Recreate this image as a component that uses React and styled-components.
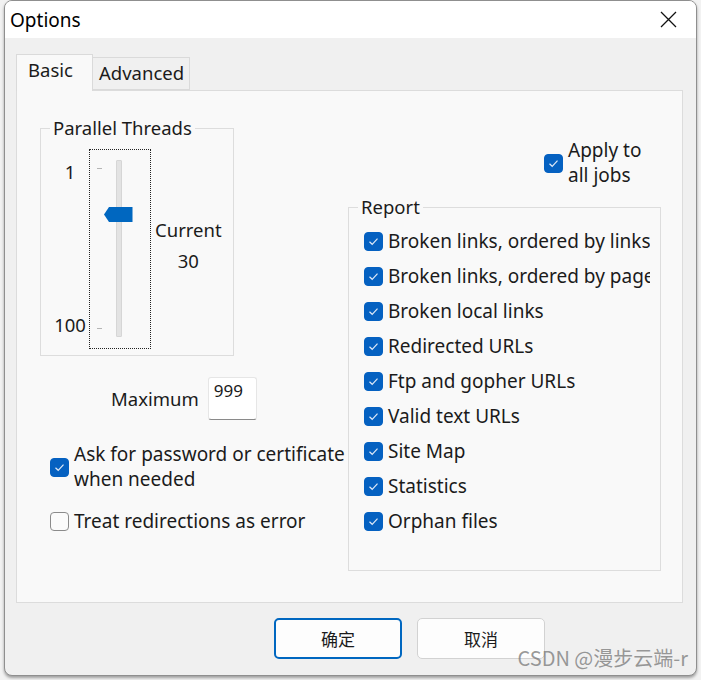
import styled, { createGlobalStyle } from "styled-components";

const Global = createGlobalStyle`
  html, body { margin: 0; padding: 0; }
  body {
    background: #f3f3f3;
    font-family: "Noto Sans", "Noto Sans CJK SC", sans-serif;
    color: #1b1b1b;
  }
  * { box-sizing: border-box; }
`;

const Screen = styled.div`
  position: relative;
  width: 701px;
  height: 680px;
  padding: 0 4px 4px 4px;
  background: #f2f2f2;
  overflow: hidden;
`;

const Window = styled.div`
  width: 693px;
  height: 676px;
  display: flex;
  flex-direction: column;
  background: #f0f0f0;
  border: 1px solid #8f8f8f;
  border-radius: 8px;
  overflow: hidden;
  box-shadow: 0 2px 3px rgba(0, 0, 0, 0.35);
`;

const TitleBar = styled.div`
  height: 37px;
  flex: none;
  display: flex;
  align-items: center;
  justify-content: space-between;
  padding: 0 19px 0 5px;
  background: #ffffff;
  font-size: 19px;
  color: #000;
`;

const Body = styled.div`
  flex: 1;
  display: flex;
  flex-direction: column;
  padding: 16px 13px 0 11px;
`;

const TabRow = styled.div`
  display: flex;
  align-items: flex-end;
  height: 36px;
  position: relative;
  z-index: 1;
`;

const Tab = styled.div`
  height: ${(p) => (p.$active ? "37px" : "33px")};
  width: ${(p) => p.$w}px;
  display: flex;
  align-items: center;
  padding-left: ${(p) => (p.$active ? "11px" : "6px")};
  margin-bottom: ${(p) => (p.$active ? "-1px" : "0")};
  background: ${(p) => (p.$active ? "#f9f9f9" : "#f0f0f0")};
  border: 1px solid #dadada;
  border-bottom: ${(p) => (p.$active ? "none" : "1px solid #dadada")};
  border-left: ${(p) => (p.$active ? "1px solid #dadada" : "none")};
  font-size: 18.5px;
  line-height: 1;
  padding-bottom: ${(p) => (p.$active ? "5px" : "0")};
`;

const Panel = styled.div`
  height: 513px;
  display: flex;
  background: #f9f9f9;
  border: 1px solid #dcdcdc;
  padding: 26px 21px 0 23px;
`;

const LeftCol = styled.div`
  width: 308px;
  flex: none;
  display: flex;
  flex-direction: column;
`;

const RightCol = styled.div`
  width: 313px;
  flex: none;
  display: flex;
  flex-direction: column;
`;

const Group = styled.fieldset`
  margin: 0;
  padding: 0;
  width: ${(p) => p.$w}px;
  height: ${(p) => p.$h}px;
  border: 1px solid #dddddd;
  min-inline-size: 0;
`;

const Legend = styled.legend`
  margin-left: 9px;
  padding: 0 3px;
  font-size: 18.5px;
  line-height: 22px;
`;

const SliderArea = styled.div`
  display: flex;
  padding: 10px 0 0 10px;
`;

const ScaleLabels = styled.div`
  width: 38px;
  height: 200px;
  display: flex;
  flex-direction: column;
  align-items: center;
  justify-content: space-between;
  padding: 12px 0 13px 0;
  font-size: 18.5px;
  line-height: 22px;
`;

const FocusBox = styled.div`
  width: 62px;
  height: 200px;
  border: 1px dotted #222;
  display: flex;
  padding: 10px 0 11px 7px;
`;

const Ticks = styled.div`
  width: 6px;
  display: flex;
  flex-direction: column;
  justify-content: space-between;
  padding: 8px 0;
`;

const Tick = styled.span`
  display: block;
  width: 5px;
  height: 1px;
  background: #b5b5b5;
`;

const Track = styled.div`
  position: relative;
  width: 6px;
  margin-left: 13px;
  background: #e3e3e3;
  border: 1px solid #d6d6d6;
  border-radius: 1px;
`;

const Thumb = styled.svg`
  position: absolute;
  left: -13px;
  top: 46px;
`;

const CurrentCol = styled.div`
  display: flex;
  flex-direction: column;
  align-items: center;
  padding: 70px 0 0 4px;
  font-size: 18.5px;
  line-height: 22px;
  gap: 9px;
`;

const MaxRow = styled.div`
  display: flex;
  align-items: center;
  gap: 9px;
  margin: 21px 0 0 71px;
  font-size: 18.5px;
`;

const NumBox = styled.div`
  width: 49px;
  height: 43px;
  background: #fff;
  border: 1px solid #e6e6e6;
  border-bottom: 1px solid #8a8a8a;
  border-radius: 3px;
  padding: 2px 0 0 5px;
  font-size: 17px;
  line-height: 22px;
`;

const CheckRow = styled.label`
  display: flex;
  align-items: center;
  gap: 5px;
  margin: ${(p) => p.$m || "0"};
  font-size: 19px;
  line-height: 25px;
  white-space: nowrap;
  overflow: hidden;
`;

const Box = styled.span`
  flex: none;
  width: 19px;
  height: 19px;
  border-radius: 4px;
  display: flex;
  align-items: center;
  justify-content: center;
  background: ${(p) => (p.$on ? "#0561c1" : "#fbfbfb")};
  border: 1px solid ${(p) => (p.$on ? "#0561c1" : "#8b8b8b")};
`;

const ReportList = styled.div`
  display: flex;
  flex-direction: column;
  gap: 10px;
  padding: 11px 10px 0 15px;
`;

const Footer = styled.div`
  display: flex;
  gap: 15px;
  padding: 15px 0 0 258px;
`;

const Button = styled.button`
  width: 128px;
  height: 41px;
  background: #fdfdfd;
  border: ${(p) => (p.$primary ? "2px solid #0067c0" : "1px solid #d2d2d2")};
  border-radius: 5px;
  font-family: "Noto Sans CJK SC", sans-serif;
  font-size: 17px;
  color: #1b1b1b;
`;

const Watermark = styled.div`
  position: absolute;
  right: 13px;
  bottom: 8px;
  font-family: "Noto Sans CJK SC", sans-serif;
  font-size: 20px;
  color: rgba(120, 120, 120, 0.75);
`;

function Check({ on }) {
  return (
    <Box $on={on}>
      {on && (
        <svg width="11" height="9" viewBox="0 0 11 9">
          <path d="M1.5 4.8 L4.2 7.3 L9.5 1.6" fill="none" stroke="#dfe9f7" strokeWidth="1.2" />
        </svg>
      )}
    </Box>
  );
}

const reports = [
  "Broken links, ordered by links",
  "Broken links, ordered by page",
  "Broken local links",
  "Redirected URLs",
  "Ftp and gopher URLs",
  "Valid text URLs",
  "Site Map",
  "Statistics",
  "Orphan files",
];

export default function App() {
  return (
    <Screen>
      <Global />
      <Window>
        <TitleBar>
          <span>Options</span>
          <svg width="17" height="17" viewBox="0 0 17 17">
            <path d="M1 1 L16 16 M16 1 L1 16" stroke="#111" strokeWidth="1.3" />
          </svg>
        </TitleBar>
        <Body>
          <TabRow>
            <Tab $active $w={77}>Basic</Tab>
            <Tab $w={97}>Advanced</Tab>
          </TabRow>
          <Panel>
            <LeftCol>
              <Group $w={194} $h={239}>
                <Legend>Parallel Threads</Legend>
                <SliderArea>
                  <ScaleLabels>
                    <span>1</span>
                    <span>100</span>
                  </ScaleLabels>
                  <FocusBox>
                    <Ticks>
                      <Tick />
                      <Tick />
                    </Ticks>
                    <Track>
                      <Thumb width="29" height="15" viewBox="0 0 29 15">
                        <path d="M0 7.5 L5 0 H28.5 V15 H5 Z" fill="#0067c0" />
                      </Thumb>
                    </Track>
                  </FocusBox>
                  <CurrentCol>
                    <span>Current</span>
                    <span>30</span>
                  </CurrentCol>
                </SliderArea>
              </Group>
              <MaxRow>
                <span>Maximum</span>
                <NumBox>999</NumBox>
              </MaxRow>
              <CheckRow $m="22px 0 0 10px">
                <Check on />
                <span>
                  Ask for password or certificate
                  <br />
                  when needed
                </span>
              </CheckRow>
              <CheckRow $m="17px 0 0 10px">
                <Check />
                <span>Treat redirections as error</span>
              </CheckRow>
            </LeftCol>
            <RightCol>
              <CheckRow $m="21px 0 0 196px">
                <Check on />
                <span>
                  Apply to
                  <br />
                  all jobs
                </span>
              </CheckRow>
              <Group $w={313} $h={375} style={{ marginTop: 8 }}>
                <Legend>Report</Legend>
                <ReportList>
                  {reports.map((r) => (
                    <CheckRow key={r}>
                      <Check on />
                      <span>{r}</span>
                    </CheckRow>
                  ))}
                </ReportList>
              </Group>
            </RightCol>
          </Panel>
          <Footer>
            <Button $primary>确定</Button>
            <Button>取消</Button>
          </Footer>
        </Body>
      </Window>
      <Watermark>CSDN @漫步云端-r</Watermark>
    </Screen>
  );
}
